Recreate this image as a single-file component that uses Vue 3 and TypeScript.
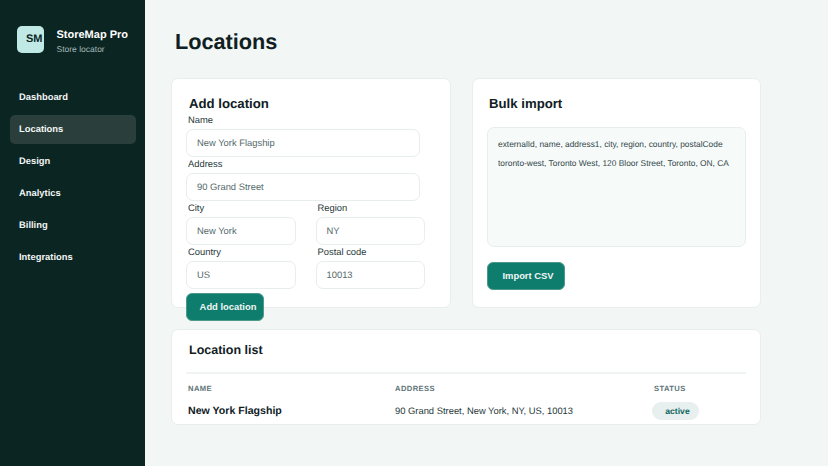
<script setup lang="ts">
const navItems = ['Dashboard', 'Locations', 'Design', 'Analytics', 'Billing', 'Integrations']
const activeNav = 'Locations'

const csvLines = [
  'externalId, name, address1, city, region, country, postalCode',
  'toronto-west, Toronto West, 120 Bloor Street, Toronto, ON, CA'
]
</script>

<template>
  <div class="shell">
    <aside class="sidebar">
      <div class="brand">
        <div class="brand-mark">SM</div>
        <div class="brand-text">
          <div class="brand-name">StoreMap Pro</div>
          <div class="brand-sub">Store locator</div>
        </div>
      </div>
      <nav class="nav">
        <a
          v-for="item in navItems"
          :key="item"
          class="nav-item"
          :class="{ active: item === activeNav }"
        >{{ item }}</a>
      </nav>
    </aside>

    <main class="main">
      <h1 class="page-title">Locations</h1>

      <div class="top-grid">
        <section class="card form-card">
          <h2 class="card-title">Add location</h2>
          <label class="field-label">Name</label>
          <div class="input wide">New York Flagship</div>
          <label class="field-label">Address</label>
          <div class="input wide">90 Grand Street</div>
          <div class="field-row">
            <div class="field">
              <label class="field-label">City</label>
              <div class="input">New York</div>
            </div>
            <div class="field">
              <label class="field-label">Region</label>
              <div class="input">NY</div>
            </div>
          </div>
          <div class="field-row">
            <div class="field">
              <label class="field-label">Country</label>
              <div class="input">US</div>
            </div>
            <div class="field">
              <label class="field-label">Postal code</label>
              <div class="input">10013</div>
            </div>
          </div>
          <button class="btn add-btn">Add location</button>
        </section>

        <section class="card import-card">
          <h2 class="card-title">Bulk import</h2>
          <div class="csv-box">
            <p v-for="line in csvLines" :key="line" class="csv-line">{{ line }}</p>
          </div>
          <button class="btn import-btn">Import CSV</button>
        </section>
      </div>

      <section class="card list-card">
        <h2 class="card-title">Location list</h2>
        <div class="table">
          <div class="table-row table-head">
            <span>Name</span>
            <span>Address</span>
            <span>Status</span>
          </div>
          <div class="table-row table-body">
            <span class="loc-name">New York Flagship</span>
            <span class="loc-address">90 Grand Street, New York, NY, US, 10013</span>
            <span class="status-cell"><span class="badge">active</span></span>
          </div>
        </div>
      </section>
    </main>
  </div>
</template>

<style>
html,
body {
  margin: 0;
  background: #f2f6f5;
}
</style>

<style scoped>
.shell {
  display: flex;
  width: 828px;
  height: 466px;
  overflow: hidden;
  background: #f2f6f5;
  font-family: "Liberation Sans", Arial, sans-serif;
  text-rendering: geometricPrecision;
  color: #10201f;
}

.sidebar {
  width: 145px;
  flex-shrink: 0;
  box-sizing: border-box;
  background: #0b2522;
  padding: 26px 9px 0 10px;
  color: #fff;
}

.brand {
  display: flex;
  align-items: flex-start;
  gap: 12.5px;
  padding-left: 7px;
  margin-bottom: 27px;
}

.brand-mark {
  box-sizing: border-box;
  width: 27px;
  height: 27px;
  padding-left: 9px;
  border-radius: 5px;
  background: #c0e9e6;
  color: #0b2522;
  font-size: 11px;
  font-weight: 700;
  line-height: 27px;
  white-space: nowrap;
  overflow: hidden;
}

.brand-text {
  padding-top: 2px;
}

.brand-name {
  font-size: 11px;
  font-weight: 700;
  line-height: 15px;
}

.brand-sub {
  font-size: 8.5px;
  line-height: 13px;
  color: #a3b9b8;
}

.nav {
  display: flex;
  flex-direction: column;
  gap: 3px;
}

.nav-item {
  height: 29px;
  padding-left: 9px;
  border-radius: 5px;
  font-size: 9.4px;
  font-weight: 700;
  line-height: 28px;
  color: #f2f6f5;
}

.nav-item.active {
  background: #2a3f3b;
}

.main {
  flex: 1;
  min-width: 0;
  box-sizing: border-box;
  padding: 26px 67px 0 26px;
}

.page-title {
  margin: 0 0 21px 4px;
  font-size: 21.7px;
  line-height: 31px;
  font-weight: 700;
  color: #10201f;
}

.top-grid {
  display: flex;
  gap: 21px;
  margin-bottom: 21px;
}

.card {
  box-sizing: border-box;
  background: #fff;
  border: 1px solid #e7eeec;
  border-radius: 7px;
}

.form-card {
  width: 280px;
  height: 230px;
  padding: 15px 14px 0;
}

.import-card {
  width: 289px;
  height: 230px;
  padding: 15px 14px 0;
}

.card-title {
  margin: 0 0 0 3px;
  font-size: 13.2px;
  line-height: 19px;
  font-weight: 700;
  color: #10201f;
}

.import-card .card-title {
  margin-left: 2px;
}

.field-label {
  display: block;
  height: 16px;
  padding-left: 2px;
  font-size: 9.4px;
  line-height: 13px;
  color: #27393a;
}

.input {
  box-sizing: border-box;
  height: 28px;
  padding-left: 10px;
  border: 1px solid #e7eeec;
  border-radius: 7px;
  background: #fff;
  font-size: 9.4px;
  line-height: 25px;
  color: #556a6c;
}

.input.wide {
  width: 234px;
}

.field-row {
  display: flex;
  gap: 20px;
}

.field {
  width: 109.5px;
}

.btn {
  display: block;
  box-sizing: border-box;
  width: 78px;
  height: 28px;
  padding: 0 0 2px 4px;
  border: 1px solid #4d9a8c;
  border-radius: 6px;
  background: #0f7d6d;
  color: #f2f6f5;
  font-family: inherit;
  font-size: 9.4px;
  font-weight: 700;
  text-align: center;
}

.add-btn {
  margin-top: 4px;
  padding-left: 6px;
}

.csv-box {
  box-sizing: border-box;
  width: 259px;
  height: 120px;
  margin-top: 14px;
  padding: 7px 10px;
  background: #f6faf9;
  border: 1px solid #e7eeec;
  border-radius: 7px;
}

.csv-line {
  margin: 0;
  font-size: 8.4px;
  line-height: 19px;
  color: #33474a;
}

.import-btn {
  margin-top: 15px;
}

.list-card {
  width: 590px;
  height: 96px;
  padding: 11px 14px 0;
}

.list-card .card-title {
  font-size: 12.5px;
}

.table {
  margin-top: 12px;
  border-top: 2px solid #f0f4f3;
}

.table-row {
  display: grid;
  grid-template-columns: 207px 259px 1fr;
  padding-left: 2px;
  align-items: center;
}

.table-head {
  height: 28px;
  font-size: 7.6px;
  font-weight: 700;
  letter-spacing: 0.4px;
  text-transform: uppercase;
  color: #5d7478;
}

.loc-name {
  font-size: 10.6px;
  font-weight: 700;
  color: #10201f;
}

.loc-address {
  padding-bottom: 2px;
  font-size: 9.4px;
  color: #27393a;
}

.status-cell {
  display: flex;
}

.badge {
  box-sizing: border-box;
  width: 47px;
  height: 18px;
  margin-left: -2px;
  padding-left: 4px;
  border-radius: 9px;
  background: #e7f0ee;
  font-size: 8.6px;
  font-weight: 700;
  line-height: 18px;
  text-align: center;
  color: #0e6660;
}
</style>
